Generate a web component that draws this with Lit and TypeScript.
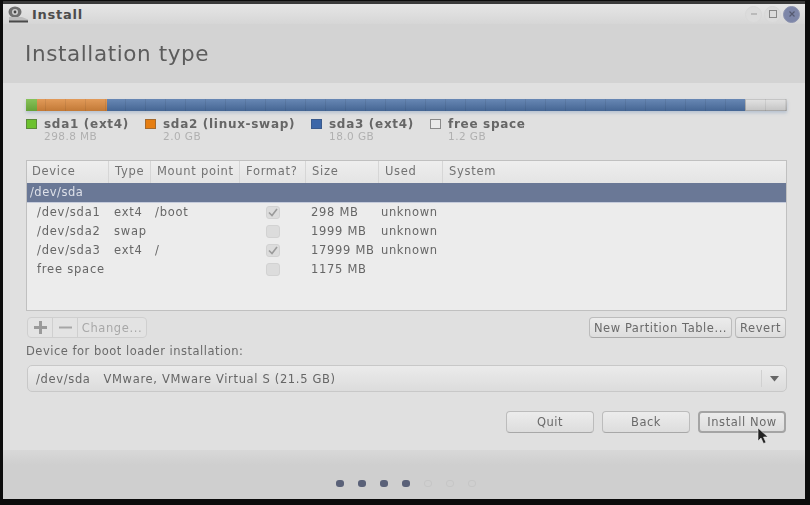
import { LitElement, html, css } from "lit";
import { customElement } from "lit/decorators.js";

const rows = [
  { d: "/dev/sda1", t: "ext4", m: "/boot", c: true, s: "298 MB", u: "unknown" },
  { d: "/dev/sda2", t: "swap", m: "", c: false, s: "1999 MB", u: "unknown" },
  { d: "/dev/sda3", t: "ext4", m: "/", c: true, s: "17999 MB", u: "unknown" },
  { d: "free space", t: "", m: "", c: false, s: "1175 MB", u: "" },
];
const legend = [
  { n: "sda1 (ext4)", v: "298.8 MB", cls: "green", w: 119 },
  { n: "sda2 (linux-swap)", v: "2.0 GB", cls: "orange", w: 166 },
  { n: "sda3 (ext4)", v: "18.0 GB", cls: "blue", w: 119 },
  { n: "free space", v: "1.2 GB", cls: "free", w: 110 },
];
const segs = [
  { cls: "green", w: 11 },
  { cls: "orange", w: 70 },
  { cls: "blue", w: 638 },
  { cls: "free", w: 42 },
];

@customElement("app-root")
export class AppRoot extends LitElement {
  static styles = css`
    :host {
      display: block;
      width: 810px;
      height: 505px;
      overflow: hidden;
      background: #0c0c0c;
      font-family: "DejaVu Sans", sans-serif;
      color: #5e5e5e;
      font-size: 11.5px;
    }
    .frame { height: 505px; padding: 4px 5px 6px 3px; box-sizing: border-box; filter: blur(0.5px); }
    .win { position: relative; height: 495px; display: flex; flex-direction: column; background: #e0e0e0; box-shadow: 0 -3px 0 #3a3a3a; }
    .top { height: 79px; background: #d3d3d3; display: flex; flex-direction: column; flex: none; }
    .titlebar { height: 20px; flex: none; display: flex; align-items: center; padding: 0 5px 0 3px; background: linear-gradient(#e6e6e6, #d6d6d6); }
    .titlebar svg { flex: none; }
    .wintitle { margin-left: 2px; font-weight: 700; font-size: 13px; color: #4c4c4c; letter-spacing: 0.75px; flex: 1; }
    .wbtn { width: 17px; height: 17px; border-radius: 50%; border: 1px solid #d8d8d8; box-sizing: border-box; margin-left: 2px; display: flex; align-items: center; justify-content: center; background: #dcdcdc; }
    .wbtn.close { background: #7d86a8; border-color: #8c93b0; }
    .heading { font-size: 21.5px; color: #5c5c5c; padding: 18px 0 0 22px; letter-spacing: 0.6px; line-height: 24px; }
    .main { flex: none; height: 367px; box-sizing: border-box; padding: 16px 18px 0 23px; display: flex; flex-direction: column; }
    .bar { display: flex; height: 12px; flex: none; position: relative; width: 761px; box-shadow: 0 2px 3px rgba(110, 140, 180, 0.35); }
    .bar::after { content: ""; position: absolute; inset: 0; background: repeating-linear-gradient(90deg, transparent 0 19px, rgba(0,0,0,0.07) 19px 20px), linear-gradient(rgba(255,255,255,0.14), rgba(0,0,0,0.12)); }
    .seg.green { background: #74b83f; }
    .seg.orange { background: #dd8a3e; }
    .seg.blue { background: #4f74a8; }
    .seg.free { background: #dedede; box-shadow: inset 0 0 0 1px #bdbdbd; }
    .legend { display: flex; margin-top: 8px; height: 31px; flex: none; }
    .li { display: flex; gap: 7px; flex: none; }
    .sw { width: 11px; height: 10px; flex: none; box-sizing: border-box; }
    .sw.green { background: #6cc12e; border: 1px solid #5b8a3a; }
    .sw.orange { background: #e67e12; border: 1px solid #a56a2e; }
    .sw.blue { background: #3d67a8; border: 1px solid #3a5a8c; }
    .sw.free { background: #eaeaea; border: 1px solid #8a8a8a; }
    .ln { font-weight: 700; font-size: 12px; letter-spacing: 0.7px; line-height: 10px; color: #666; white-space: nowrap; }
    .lv { font-size: 10.5px; color: #b0b0b0; letter-spacing: 0.45px; line-height: 12px; margin-top: 1px; white-space: nowrap; }
    .table { margin-top: 10px; width: 761px; height: 151px; flex: none; box-sizing: border-box; border: 1px solid #c0c0c0; background: #ececec; overflow: hidden; }
    .row { display: grid; grid-template-columns: 82px 42px 89px 66px 73px 64px 1fr; align-items: center; }
    .head { height: 22px; background: linear-gradient(#eeeeee, #e4e4e4); color: #727272; letter-spacing: 0.7px; }
    .head span { height: 22px; line-height: 21px; padding-left: 6px; border-right: 1px solid #d6d6d6; box-sizing: border-box; white-space: nowrap; }
    .head span:first-child { padding-left: 5px; }
    .head span:last-child { border-right: 0; }
    .sel { height: 20px; background: #6a7896; color: #dde0e8; line-height: 19px; padding-left: 3px; border-bottom: 1px solid #c5cbdb; box-sizing: border-box; letter-spacing: 0.5px; }
    .data { height: 19px; color: #666; letter-spacing: 0.78px; }
    .data span { white-space: nowrap; line-height: 19px; }
    .data .d { padding-left: 10px; }
    .data .t { padding-left: 5px; }
    .data .m { padding-left: 4px; }
    .data .s { padding-left: 5px; letter-spacing: 0.7px; }
    .data .u { padding-left: 2px; letter-spacing: 0.62px; }
    .cb { justify-self: center; width: 14px; height: 13px; border: 1px solid #d2d2d2; background: #dcdcdc; border-radius: 3px; box-sizing: border-box; display: flex; align-items: center; justify-content: center; }
    .tools { margin-top: 6px; display: flex; height: 21px; flex: none; padding-left: 1px; width: 760px; box-sizing: border-box; }
    .group { display: flex; height: 21px; border: 1px solid #cfcfcf; border-radius: 4px; box-sizing: border-box; background: #e3e3e3; width: 120px; flex: none; }
    .group > div { display: flex; align-items: center; justify-content: center; border-right: 1px solid #cfcfcf; box-sizing: border-box; }
    .group > div:last-child { border-right: 0; color: #a8a8a8; letter-spacing: 0.6px; flex: 1; }
    .ic { width: 25px; }
    .spacer { flex: 1; }
    .btn { height: 21px; border: 1px solid #bcbcbc; border-bottom-color: #a8a8a8; border-radius: 4px; box-sizing: border-box; background: linear-gradient(#ececec, #dddddd); display: flex; align-items: center; justify-content: center; color: #6a6a6a; letter-spacing: 0.55px; white-space: nowrap; flex: none; }
    .lbl { margin-top: 6px; line-height: 14px; height: 14px; color: #6a6a6a; letter-spacing: 0.5px; flex: none; }
    .combo { margin: 7px 0 0 1px; width: 760px; height: 27px; flex: none; box-sizing: border-box; border: 1px solid #c8c8c8; border-radius: 5px; background: linear-gradient(#ebebeb, #dcdcdc); display: flex; align-items: center; color: #666; letter-spacing: 0.66px; }
    .combo .txt { flex: 1; padding-left: 8px; white-space: pre; }
    .combo .arrow { width: 24px; height: 17px; border-left: 1px solid #d0d0d0; display: flex; align-items: center; justify-content: center; }
    .actions { margin-top: 19px; display: flex; justify-content: flex-end; gap: 8px; width: 760px; flex: none; }
    .actions .btn { width: 88px; height: 22px; font-size: 11.5px; }
    .actions .btn.def { border: 2px solid #a4a4a4; }
    .foot { flex: 1; background: linear-gradient(#d8d8d8 0, #cfcfcf 30%); display: flex; justify-content: center; gap: 14px; padding: 30px 0 0 3px; box-sizing: border-box; }
    .dot { width: 8px; height: 7px; border-radius: 3px; background: #5a6178; flex: none; }
    .dot.off { background: transparent; border: 1px solid #c6c6c6; box-sizing: border-box; }
    .cursor { position: absolute; left: 754px; top: 423px; }
  `;

  render() {
    return html`<div class="frame"><div class="win">
      <div class="top">
        <div class="titlebar">
          <svg width="24" height="17" viewBox="0 0 24 17"><ellipse cx="9" cy="6" rx="6.500" ry="5.500" fill="#707070"/><circle cx="9" cy="6" r="3" fill="#d0d0d0"/><circle cx="9" cy="6" r="1.400" fill="#444"/><path d="M3 11h13l6 2.500V16H3z" fill="#bcbcbc"/><path d="M3 14.500h19V16.500H3z" fill="#4a4a4a"/></svg>
          <span class="wintitle">Install</span>
          <div class="wbtn"><svg width="8" height="8"><path d="M1 4h6" stroke="#999" stroke-width="1"/></svg></div>
          <div class="wbtn"><svg width="8" height="8"><rect x="0.500" y="0.500" width="7" height="7" fill="none" stroke="#888"/></svg></div>
          <div class="wbtn close"><svg width="8" height="8"><path d="M1.500 1.500l5 5M6.500 1.500l-5 5" stroke="#555a70" stroke-width="1.200"/></svg></div>
        </div>
        <div class="heading">Installation type</div>
      </div>
      <div class="main">
        <div class="bar">${segs.map((s) => html`<div class="seg ${s.cls}" style="width:${s.w}px"></div>`)}</div>
        <div class="legend">
          ${legend.map((l) => html`<div class="li" style="width:${l.w}px"><div class="sw ${l.cls}"></div><div><div class="ln">${l.n}</div><div class="lv">${l.v}</div></div></div>`)}
        </div>
        <div class="table">
          <div class="row head"><span>Device</span><span>Type</span><span>Mount point</span><span>Format?</span><span>Size</span><span>Used</span><span>System</span></div>
          <div class="sel">/dev/sda</div>
          ${rows.map((r) => html`<div class="row data">
            <span class="d">${r.d}</span><span class="t">${r.t}</span><span class="m">${r.m}</span>
            <div class="cb">${r.c ? html`<svg width="10" height="9" viewBox="0 0 10 9"><path d="M1 4.500l3 3 5-6.500" fill="none" stroke="#9a9a9a" stroke-width="1.600"/></svg>` : ""}</div>
            <span class="s">${r.s}</span><span class="u">${r.u}</span><span></span>
          </div>`)}
        </div>
        <div class="tools">
          <div class="group">
            <div class="ic"><svg width="15" height="15" viewBox="0 0 15 15"><path d="M7.500 1v13M1 7.500h13" stroke="#9a9a9a" stroke-width="3"/></svg></div>
            <div class="ic"><svg width="15" height="15" viewBox="0 0 15 15"><path d="M1 7.500h13" stroke="#a6a6a6" stroke-width="2"/></svg></div>
            <div>Change...</div>
          </div>
          <div class="spacer"></div>
          <div class="btn" style="width:143px">New Partition Table...</div>
          <div class="btn" style="width:51px;margin-left:3px">Revert</div>
        </div>
        <div class="lbl">Device for boot loader installation:</div>
        <div class="combo"><span class="txt">/dev/sda   VMware, VMware Virtual S (21.5 GB)</span><span class="arrow"><svg width="9" height="6"><path d="M0 0h9L4.500 5.500z" fill="#666"/></svg></span></div>
        <div class="actions">
          <div class="btn">Quit</div><div class="btn">Back</div><div class="btn def">Install Now</div>
        </div>
      </div>
      <div class="foot">
        ${[0, 1, 2, 3].map(() => html`<div class="dot"></div>`)}
        ${[0, 1, 2].map(() => html`<div class="dot off"></div>`)}
      </div>
      <svg class="cursor" width="13" height="18" viewBox="0 0 13 18"><path d="M1 1v13l3-3 2.500 5.500 2.500-1L6.500 10H11z" fill="#222" stroke="#eee" stroke-width="0.600"/></svg>
    </div></div>`;
  }
}
